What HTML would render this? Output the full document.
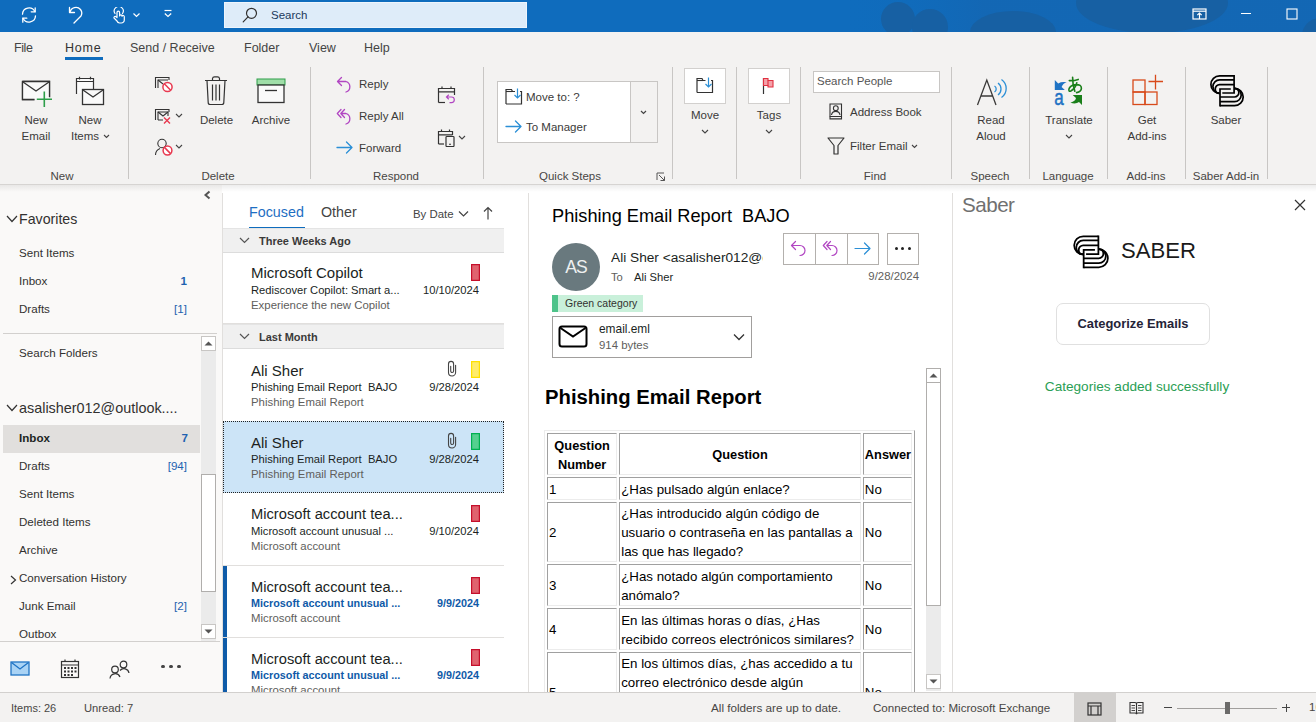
<!DOCTYPE html><html><head><meta charset="utf-8"><style>
*{margin:0;padding:0}
html,body{width:1316px;height:722px;overflow:hidden;background:#fff;font-family:"Liberation Sans", sans-serif;}
.a{position:absolute}
.t{position:absolute;white-space:nowrap;line-height:1}
table.em{border-collapse:separate;border-spacing:2px;border:1px solid;border-color:#ececec #a0a0a0 #a0a0a0 #ececec;font-size:13.3px;line-height:19px;color:#000;table-layout:fixed}
table.em th,table.em td{border:1px solid;border-color:#a0a0a0 #ececec #ececec #a0a0a0;padding:1px 1px 0 1px;vertical-align:middle;text-align:left;font-weight:400;box-sizing:border-box}
table.em th{font-weight:700;text-align:center;font-size:12.8px;line-height:19px}
</style></head><body>
<div class="a" style="left:0px;top:0px;width:1316px;height:32px;background:#0f6cbd;overflow:hidden"></div>
<svg class="a" style="left:640px;top:0px;" width="676" height="32" viewBox="0 0 676 32" fill="none">
<defs><linearGradient id="tg" x1="0" x2="1"><stop offset="0" stop-color="#0f6cbd" stop-opacity="0"/><stop offset="0.3" stop-color="#1466b2" stop-opacity="1"/></linearGradient></defs>
<rect x="200" y="0" width="476" height="32" fill="url(#tg)" opacity="0.8"/>
<g fill="#1760a3">
<circle cx="258" cy="19" r="17"/>
<circle cx="290" cy="27" r="18"/>
<ellipse cx="373" cy="32" rx="43" ry="21"/>
<ellipse cx="512" cy="3" rx="76" ry="30"/>
<circle cx="680" cy="36" r="18"/>
</g></svg>
<svg class="a" style="left:20px;top:6px;" width="18" height="18" viewBox="0 0 18 18" fill="none"><g stroke="#ffffff" stroke-width="1.3" stroke-linecap="round" fill="none">
<path d="M2.5 8.2 A6.5 6.5 0 0 1 14.8 5.5"/><path d="M15.5 9.8 A6.5 6.5 0 0 1 3.2 12.5"/>
<path d="M15.2 1.8 V5.8 H11.2"/><path d="M2.8 16.2 V12.2 H6.8"/></g></svg>
<svg class="a" style="left:68px;top:6px;" width="16" height="18" viewBox="0 0 16 18" fill="none"><g stroke="#ffffff" stroke-width="1.3" stroke-linecap="round" stroke-linejoin="round" fill="none">
<path d="M1.5 1.5 V6.5 H6.5"/><path d="M2 6.2 A6 6 0 0 1 12.5 3.5 A6 6 0 0 1 13 10 L6 17"/></g></svg>
<svg class="a" style="left:112px;top:7px;" width="14" height="17" viewBox="0 0 14 17" fill="none"><g stroke="#ffffff" stroke-width="1.2" stroke-linecap="round" stroke-linejoin="round" fill="none">
<path d="M3 6.5 A4.5 4.5 0 1 1 10.5 6.5"/>
<path d="M5 14 L2 11 A1.2 1.2 0 0 1 3.8 9.6 L5 10.6 V5.5 A1.3 1.3 0 0 1 7.6 5.5 V9 A1.2 1.2 0 0 1 10 9.2 A1.2 1.2 0 0 1 12.3 9.8 V13 A3 3 0 0 1 9.3 16 H7.5 A3 3 0 0 1 5 14 Z"/></g></svg>
<svg class="a" style="left:132px;top:12px;" width="9" height="6" viewBox="0 0 9 6" fill="none"><path d="M1.5 1.5 L4.5 4.5 L7.5 1.5" stroke="#ffffff" stroke-width="1.2" fill="none"/></svg>
<svg class="a" style="left:163px;top:9px;" width="10" height="9" viewBox="0 0 10 9" fill="none"><g stroke="#ffffff" stroke-width="1.2" fill="none"><path d="M1.5 1.5 H8.5"/><path d="M1.8 4.5 L5 7.5 L8.2 4.5"/></g></svg>
<div class="a" style="left:224px;top:2px;width:303px;height:26px;background:#deecf9;box-shadow:inset 0 0 0 1px #eef5fc"></div>
<svg class="a" style="left:242px;top:7px;" width="16" height="16" viewBox="0 0 16 16" fill="none"><g stroke="#323130" stroke-width="1.2" fill="none"><circle cx="9.5" cy="6.3" r="5"/><path d="M6 9.8 L1.2 14.8" stroke-linecap="round"/></g></svg>
<div class="t" style="left:271px;top:10.27px;font-size:11.5px;color:#1b3a5c;">Search</div>
<svg class="a" style="left:1192px;top:8px;" width="15" height="12" viewBox="0 0 15 12" fill="none"><g stroke="#ffffff" stroke-width="1.2" fill="none"><rect x="1" y="1" width="13" height="10"/><path d="M1 3.2 H14"/><path d="M7.5 11 V5.2 M5.3 7.2 L7.5 5 L9.7 7.2"/></g></svg>
<div class="a" style="left:1241px;top:13px;width:10px;height:1px;background:#fff"></div>
<svg class="a" style="left:1286px;top:8px;" width="12" height="12" viewBox="0 0 12 12" fill="none"><rect x="1" y="1" width="10" height="10" stroke="#ffffff" stroke-width="1.1" fill="none"/></svg>
<div class="a" style="left:0px;top:32px;width:1316px;height:153px;background:#f3f2f1"></div>
<div class="t" style="left:14px;top:42.42px;font-size:12.5px;color:#444;letter-spacing:-0.4px;">File</div>
<div class="t" style="left:65px;top:42.42px;font-size:12.5px;color:#333;letter-spacing:0.8px;">Home</div>
<div class="a" style="left:65px;top:57px;width:38px;height:3px;background:#0f6cbd"></div>
<div class="t" style="left:130px;top:42.42px;font-size:12.5px;color:#444;">Send / Receive</div>
<div class="t" style="left:244px;top:42.42px;font-size:12.5px;color:#444;">Folder</div>
<div class="t" style="left:309px;top:42.42px;font-size:12.5px;color:#444;">View</div>
<div class="t" style="left:364px;top:42.42px;font-size:12.5px;color:#444;">Help</div>
<div class="a" style="left:0px;top:184px;width:1316px;height:1px;background:#d6d4d2"></div>
<div class="a" style="left:128px;top:67px;width:1px;height:112px;background:#c8c6c4"></div>
<div class="a" style="left:310px;top:67px;width:1px;height:112px;background:#c8c6c4"></div>
<div class="a" style="left:483px;top:67px;width:1px;height:112px;background:#c8c6c4"></div>
<div class="a" style="left:672px;top:67px;width:1px;height:112px;background:#c8c6c4"></div>
<div class="a" style="left:736px;top:67px;width:1px;height:112px;background:#c8c6c4"></div>
<div class="a" style="left:800px;top:67px;width:1px;height:112px;background:#c8c6c4"></div>
<div class="a" style="left:951px;top:67px;width:1px;height:112px;background:#c8c6c4"></div>
<div class="a" style="left:1029px;top:67px;width:1px;height:112px;background:#c8c6c4"></div>
<div class="a" style="left:1107px;top:67px;width:1px;height:112px;background:#c8c6c4"></div>
<div class="a" style="left:1185px;top:67px;width:1px;height:112px;background:#c8c6c4"></div>
<div class="a" style="left:1267px;top:67px;width:1px;height:112px;background:#c8c6c4"></div>
<svg class="a" style="left:21px;top:80px;" width="32" height="28" viewBox="0 0 32 28" fill="none"><path d="M1.5 1.5 H28.5 V17.5 M13.5 19.5 H1.5 V1.5" stroke="#333" stroke-width="1.3" fill="#fafafa"/>
<rect x="1.5" y="1.5" width="27" height="18" fill="#fafafa"/>
<path d="M13.5 19.5 H1.5 V1.5 H28.5 V17" stroke="#333" stroke-width="1.3" fill="none"/>
<path d="M2 2 L15 11 L28 2" stroke="#333" stroke-width="1.3" fill="none"/>
<path d="M23.3 11.5 V27 M15.8 19.3 H31" stroke="#2e9e4a" stroke-width="1.6"/></svg>
<div class="t" style="left:-264px;width:600px;text-align:center;top:115.27px;font-size:11.5px;color:#3b3a39;">New</div>
<div class="t" style="left:-264px;width:600px;text-align:center;top:131.27px;font-size:11.5px;color:#3b3a39;">Email</div>
<svg class="a" style="left:75px;top:76px;" width="30" height="30" viewBox="0 0 30 30" fill="none"><path d="M1.5 18 V2.5 H18.5 V13" stroke="#333" stroke-width="1.2" fill="#fafafa"/>
<path d="M1.5 5.5 H18.5 M4.5 0.8 V3.5 M15.5 0.8 V3.5" stroke="#333" stroke-width="1.2"/>
<rect x="7.5" y="13.5" width="21" height="15" stroke="#333" stroke-width="1.3" fill="#fafafa"/>
<path d="M8 14 L18 21 L28 14" stroke="#333" stroke-width="1.3" fill="none"/></svg>
<div class="t" style="left:-210px;width:600px;text-align:center;top:115.27px;font-size:11.5px;color:#3b3a39;">New</div>
<div class="t" style="left:-215px;width:600px;text-align:center;top:131.27px;font-size:11.5px;color:#3b3a39;">Items</div>
<svg class="a" style="left:103px;top:134px;" width="7" height="5" viewBox="0 0 7 5" fill="none"><path d="M1 1 L3.5 3.5 L6 1" stroke="#444" stroke-width="1.1" fill="none"/></svg>
<div class="t" style="left:-238px;width:600px;text-align:center;top:171.27px;font-size:11.5px;color:#484644;">New</div>
<svg class="a" style="left:154px;top:76px;" width="20" height="17" viewBox="0 0 20 17" fill="none"><path d="M1.5 12 V1.5 H15 V4" stroke="#333" stroke-width="1.1" fill="none"/><path d="M4 12 V4 H14" stroke="#333" stroke-width="1.1" fill="none"/>
<path d="M4 4 L9 8" stroke="#333" stroke-width="1.1"/>
<circle cx="13.5" cy="11" r="4.6" stroke="#e8384f" stroke-width="1.5" fill="#fff"/><path d="M10.3 7.8 L16.7 14.2" stroke="#e8384f" stroke-width="1.5"/></svg>
<svg class="a" style="left:154px;top:108px;" width="20" height="17" viewBox="0 0 20 17" fill="none"><path d="M1.5 12 V1.5 H15 V4" stroke="#333" stroke-width="1.1" fill="none"/><path d="M4 12 H9 M4 12 V4 H14 V8" stroke="#333" stroke-width="1.1" fill="none"/>
<path d="M4 4 L9 8 L14 4" stroke="#333" stroke-width="1.1"/>
<path d="M10 9.5 L16 15.5 M16 9.5 L10 15.5" stroke="#e8384f" stroke-width="1.4"/></svg>
<svg class="a" style="left:175px;top:113px;" width="8" height="5" viewBox="0 0 8 5" fill="none"><path d="M1 1 L4 4 L7 1" stroke="#444" stroke-width="1.1" fill="none"/></svg>
<svg class="a" style="left:154px;top:138px;" width="20" height="18" viewBox="0 0 20 18" fill="none"><circle cx="8" cy="5.5" r="4.2" stroke="#333" stroke-width="1.1" fill="none"/><path d="M1.5 17 A7 7 0 0 1 6 10.5" stroke="#333" stroke-width="1.1" fill="none"/>
<circle cx="13.5" cy="12.5" r="4.4" stroke="#e8384f" stroke-width="1.5" fill="#fff"/><path d="M10.4 9.4 L16.6 15.6" stroke="#e8384f" stroke-width="1.5"/></svg>
<svg class="a" style="left:175px;top:144px;" width="8" height="5" viewBox="0 0 8 5" fill="none"><path d="M1 1 L4 4 L7 1" stroke="#444" stroke-width="1.1" fill="none"/></svg>
<svg class="a" style="left:204px;top:76px;" width="24" height="30" viewBox="0 0 24 30" fill="none"><path d="M1 4.5 H23 M8.5 4.5 V2.5 A2 2 0 0 1 10.5 0.8 H13.5 A2 2 0 0 1 15.5 2.5 V4.5" stroke="#333" stroke-width="1.2" fill="none"/>
<path d="M3 4.5 L4.2 26.5 A2 2 0 0 0 6.2 28.5 H17.8 A2 2 0 0 0 19.8 26.5 L21 4.5" stroke="#333" stroke-width="1.2" fill="none"/>
<path d="M8.5 8.5 V24.5 M12 8.5 V24.5 M15.5 8.5 V24.5" stroke="#333" stroke-width="1.2"/></svg>
<div class="t" style="left:-83.5px;width:600px;text-align:center;top:115.27px;font-size:11.5px;color:#3b3a39;">Delete</div>
<svg class="a" style="left:256px;top:78px;" width="30" height="26" viewBox="0 0 30 26" fill="none"><rect x="1" y="1" width="28" height="6" fill="#9fdea8" stroke="#2e9e4a" stroke-width="1"/>
<rect x="2" y="7" width="26" height="17.5" stroke="#333" stroke-width="1.3" fill="#fafafa"/>
<path d="M9 12.5 H21" stroke="#333" stroke-width="1.3"/></svg>
<div class="t" style="left:-29px;width:600px;text-align:center;top:115.27px;font-size:11.5px;color:#3b3a39;">Archive</div>
<div class="t" style="left:-82px;width:600px;text-align:center;top:171.27px;font-size:11.5px;color:#484644;">Delete</div>
<svg class="a" style="left:336px;top:76px;" width="18" height="17" viewBox="0 0 18 17" fill="none"><path d="M5.5 1.5 L1.5 5.5 L5.5 9.5 M1.8 5.5 H10 A5.5 5.5 0 0 1 10 16" stroke="#b146c2" stroke-width="1.3" fill="none" stroke-linecap="round" stroke-linejoin="round"/></svg>
<div class="t" style="left:359px;top:79.27px;font-size:11.5px;color:#3b3a39;">Reply</div>
<svg class="a" style="left:336px;top:108px;" width="18" height="17" viewBox="0 0 18 17" fill="none"><path d="M5 1.5 L1.3 5.5 L5 9.5 M8.5 1.5 L4.8 5.5 L8.5 9.5 M5 5.5 H10 A5.5 5.5 0 0 1 10 16" stroke="#b146c2" stroke-width="1.3" fill="none" stroke-linecap="round" stroke-linejoin="round"/></svg>
<div class="t" style="left:359px;top:111.27px;font-size:11.5px;color:#3b3a39;">Reply All</div>
<svg class="a" style="left:336px;top:141px;" width="18" height="13" viewBox="0 0 18 13" fill="none"><path d="M1 6.5 H16 M10.5 1 L16 6.5 L10.5 12" stroke="#2b8fd6" stroke-width="1.3" fill="none" stroke-linecap="round" stroke-linejoin="round"/></svg>
<div class="t" style="left:359px;top:143.27px;font-size:11.5px;color:#3b3a39;">Forward</div>
<svg class="a" style="left:437px;top:86px;" width="20" height="18" viewBox="0 0 20 18" fill="none"><path d="M1.5 16.5 V2.5 H17.5 V9" stroke="#333" stroke-width="1.2" fill="none"/><path d="M1.5 16.5 H8" stroke="#333" stroke-width="1.2"/>
<path d="M1.5 5.8 H17.5 M5 0.5 V3 M14 0.5 V3" stroke="#333" stroke-width="1.2"/>
<path d="M11.8 8.8 L9.5 11 L11.8 13.2 M9.8 11 H14.5 A2.8 2.8 0 0 1 14.5 16.6 H12.5" stroke="#b146c2" stroke-width="1.2" fill="none"/></svg>
<svg class="a" style="left:437px;top:129px;" width="19" height="18" viewBox="0 0 19 18" fill="none"><path d="M1.5 15 V2.5 H15.5 V6" stroke="#333" stroke-width="1.2" fill="none"/><path d="M1.5 15 H7" stroke="#333" stroke-width="1.2"/>
<path d="M1.5 5.8 H15.5 M4.5 0.5 V3 M12.5 0.5 V3" stroke="#333" stroke-width="1.2"/>
<rect x="9" y="7.5" width="8" height="10" rx="0.8" stroke="#333" stroke-width="1.2" fill="#f3f2f1"/><path d="M12 15.2 H14" stroke="#333" stroke-width="1.1"/></svg>
<svg class="a" style="left:458px;top:135px;" width="8" height="5" viewBox="0 0 8 5" fill="none"><path d="M1 1 L4 4 L7 1" stroke="#444" stroke-width="1.1" fill="none"/></svg>
<div class="t" style="left:96px;width:600px;text-align:center;top:171.27px;font-size:11.5px;color:#484644;">Respond</div>
<div class="a" style="left:497px;top:81px;width:161px;height:62px;background:#fff;box-shadow:inset 0 0 0 1px #c8c6c4"></div>
<div class="a" style="left:630px;top:82px;width:27px;height:60px;background:#f3f2f1;border-left:1px solid #c8c6c4;box-sizing:border-box"></div>
<svg class="a" style="left:505px;top:88px;" width="18" height="17" viewBox="0 0 18 17" fill="none"><path d="M1 16 V1.5 H6.5 L7.5 3.5 H10" stroke="#333" stroke-width="1.2" fill="none"/><path d="M1 16 H16.5 V3.5 H15" stroke="#333" stroke-width="1.2" fill="none"/>
<path d="M1 3.5 H7" stroke="#333" stroke-width="1.1"/>
<path d="M12.5 0.5 V10 M9.5 7 L12.5 10 L15.5 7" stroke="#2b8fd6" stroke-width="1.2" fill="none"/></svg>
<div class="t" style="left:526px;top:92.27px;font-size:11.5px;color:#3b3a39;">Move to: ?</div>
<svg class="a" style="left:505px;top:120px;" width="18" height="13" viewBox="0 0 18 13" fill="none"><path d="M1 6.5 H16 M10.5 1 L16 6.5 L10.5 12" stroke="#2b8fd6" stroke-width="1.3" fill="none" stroke-linecap="round" stroke-linejoin="round"/></svg>
<div class="t" style="left:526px;top:122.27px;font-size:11.5px;color:#3b3a39;">To Manager</div>
<svg class="a" style="left:640px;top:110px;" width="7" height="5" viewBox="0 0 7 5" fill="none"><path d="M1 1 L3.5 3.5 L6 1" stroke="#444" stroke-width="1.2" fill="none"/></svg>
<div class="t" style="left:270px;width:600px;text-align:center;top:171.27px;font-size:11.5px;color:#484644;">Quick Steps</div>
<svg class="a" style="left:656px;top:172px;" width="10" height="9" viewBox="0 0 10 9" fill="none"><path d="M1 8 V1 H8 M3 3 L8.5 8.5 M4.5 8.5 H8.5 V4.5" stroke="#555" stroke-width="1" fill="none"/></svg>
<div class="a" style="left:684px;top:68px;width:42px;height:36px;background:#fff;box-shadow:inset 0 0 0 1px #d2d0ce"></div>
<svg class="a" style="left:696px;top:77px;" width="18" height="17" viewBox="0 0 18 17" fill="none"><path d="M1 15.5 V1.5 H6 L7 3.5 H9.5" stroke="#333" stroke-width="1.2" fill="none"/><path d="M1 15.5 H16.5 V3.5 H15" stroke="#333" stroke-width="1.2" fill="none"/>
<path d="M1 3.5 H7" stroke="#333" stroke-width="1.1"/>
<path d="M12.5 0.5 V10 M9.5 7 L12.5 10 L15.5 7" stroke="#2b8fd6" stroke-width="1.2" fill="none"/></svg>
<div class="t" style="left:405px;width:600px;text-align:center;top:110.27px;font-size:11.5px;color:#3b3a39;">Move</div>
<svg class="a" style="left:701px;top:129px;" width="8" height="5" viewBox="0 0 8 5" fill="none"><path d="M1 1 L4 4 L7 1" stroke="#444" stroke-width="1.1" fill="none"/></svg>
<div class="a" style="left:748px;top:68px;width:42px;height:36px;background:#fff;box-shadow:inset 0 0 0 1px #d2d0ce"></div>
<svg class="a" style="left:762px;top:77px;" width="13" height="18" viewBox="0 0 13 18" fill="none"><path d="M1.5 1 V17" stroke="#333" stroke-width="1.2"/>
<path d="M1.5 1.5 H6 V3.5 H11 V10 H6 V8.5 H1.5 Z" fill="#f4a1a9" stroke="#e03040" stroke-width="1.1"/>
<path d="M6 3.5 V8.5" stroke="#e03040" stroke-width="1.1"/></svg>
<div class="t" style="left:469px;width:600px;text-align:center;top:110.27px;font-size:11.5px;color:#3b3a39;">Tags</div>
<svg class="a" style="left:765px;top:129px;" width="8" height="5" viewBox="0 0 8 5" fill="none"><path d="M1 1 L4 4 L7 1" stroke="#444" stroke-width="1.1" fill="none"/></svg>
<div class="a" style="left:813px;top:71px;width:127px;height:22px;background:#fff;box-shadow:inset 0 0 0 1px #c8c6c4"></div>
<div class="t" style="left:817px;top:76.27px;font-size:11.5px;color:#555;">Search People</div>
<svg class="a" style="left:829px;top:103px;" width="14" height="17" viewBox="0 0 14 17" fill="none"><path d="M1 1 H12.5 V13.5 H1 Z" stroke="#333" stroke-width="1.1" fill="none"/><path d="M1 13.5 V16 H12.5 V13.5 M1 15.8 H12.5" stroke="#333" stroke-width="1.1" fill="none"/>
<circle cx="6.8" cy="5.2" r="2.4" stroke="#333" stroke-width="1.1" fill="none"/><path d="M2.5 12 A4.3 4.3 0 0 1 11 12" stroke="#333" stroke-width="1.1" fill="none"/></svg>
<div class="t" style="left:850px;top:107.27px;font-size:11.5px;color:#3b3a39;">Address Book</div>
<svg class="a" style="left:827px;top:137px;" width="18" height="18" viewBox="0 0 18 18" fill="none"><path d="M1 1 H17 L11 8.5 V17 H7 V8.5 Z" stroke="#333" stroke-width="1.2" fill="none" stroke-linejoin="round"/></svg>
<div class="t" style="left:850px;top:141.27px;font-size:11.5px;color:#3b3a39;">Filter Email</div>
<svg class="a" style="left:911px;top:144px;" width="7" height="5" viewBox="0 0 7 5" fill="none"><path d="M1 1 L3.5 3.5 L6 1" stroke="#444" stroke-width="1.1" fill="none"/></svg>
<div class="t" style="left:575px;width:600px;text-align:center;top:171.27px;font-size:11.5px;color:#484644;">Find</div>
<svg class="a" style="left:975px;top:76px;" width="32" height="31" viewBox="0 0 32 31" fill="none"><path d="M2.5 29 L11.8 4 L21 29 M6 20 H17.5" stroke="#3b3a39" stroke-width="1.3" fill="none"/>
<path d="M19.5 10 A3.5 3.5 0 0 1 19.5 16 M23 7 A7.5 7.5 0 0 1 23 19 M26.5 3.5 A11 11 0 0 1 26.5 21.5" stroke="#2b8fd6" stroke-width="1.3" fill="none"/></svg>
<div class="t" style="left:691px;width:600px;text-align:center;top:115.27px;font-size:11.5px;color:#3b3a39;">Read</div>
<div class="t" style="left:691px;width:600px;text-align:center;top:131.27px;font-size:11.5px;color:#3b3a39;">Aloud</div>
<div class="t" style="left:690px;width:600px;text-align:center;top:171.27px;font-size:11.5px;color:#484644;">Speech</div>
<svg class="a" style="left:1048px;top:72px;" width="42" height="38" viewBox="0 0 42 38" fill="none"><path d="M6.8 7.9 V17.9 H16.8 L13.6 15 Q14.8 11.6 18.7 10.3 Q13.5 9.6 10.2 11.4 Z" fill="#1f73c4"/>
<text transform="translate(6.3 32.9) scale(1 1.3)" font-family="Liberation Sans, sans-serif" font-size="17" fill="#1f73c4" stroke="#1f73c4" stroke-width="0.4">a</text>
<g stroke="#1a7f1a" stroke-width="1.6" fill="none" stroke-linecap="round">
<path d="M21.3 8.6 Q26 8.9 30.2 7.4"/>
<path d="M24.6 5.3 Q24.6 13 26.8 19.2"/>
<path d="M28.8 10.8 Q27.4 16.5 22.8 19 Q20.6 20 20.9 17.2 Q21.8 13.2 28 12.6 Q33.4 12.4 33.4 16.2 Q33.4 19.6 28.6 20.6"/>
</g>
<path d="M34 22.9 V32.9 L31 30 Q28 32.5 22.4 30.8 Q27.6 28.8 28 25.9 L24.7 22.9 Z" fill="#1a7f1a"/></svg>
<div class="t" style="left:769px;width:600px;text-align:center;top:115.27px;font-size:11.5px;color:#3b3a39;">Translate</div>
<svg class="a" style="left:1065px;top:134px;" width="8" height="5" viewBox="0 0 8 5" fill="none"><path d="M1 1 L4 4 L7 1" stroke="#444" stroke-width="1.1" fill="none"/></svg>
<div class="t" style="left:768px;width:600px;text-align:center;top:171.27px;font-size:11.5px;color:#484644;">Language</div>
<svg class="a" style="left:1131px;top:74px;" width="34" height="33" viewBox="0 0 34 33" fill="none"><g stroke="#d84a1b" stroke-width="1.3" fill="none">
<rect x="2" y="6" width="12" height="12"/><rect x="2" y="18" width="12" height="12.5"/><rect x="14" y="18" width="12" height="12.5"/>
<path d="M24.5 0.8 V15.5 M17.5 7.5 H32"/></g></svg>
<div class="t" style="left:847px;width:600px;text-align:center;top:115.27px;font-size:11.5px;color:#3b3a39;">Get</div>
<div class="t" style="left:847px;width:600px;text-align:center;top:131.27px;font-size:11.5px;color:#3b3a39;">Add-ins</div>
<div class="t" style="left:846px;width:600px;text-align:center;top:171.27px;font-size:11.5px;color:#484644;">Add-ins</div>
<svg class="a" style="left:1205px;top:70px;" width="45" height="40" viewBox="0 0 45 40" fill="none"><g stroke="#000" stroke-width="1.7" fill="none">
<path d="M29.1 5.9 H14.6 A8.7 8.7 0 0 0 14.6 23.3"/>
<path d="M29.1 9.9 H14.6 A6.7 6.7 0 0 0 14.6 23.3"/>
<path d="M29.1 14.6 H14.6 A4.35 4.35 0 0 0 14.6 23.3"/>
<path d="M29.1 5.05 V23 H17.3"/>
<path d="M15 35.7 H29.5 A8.7 8.7 0 0 0 29.5 18.3"/>
<path d="M15 31.7 H29.5 A6.7 6.7 0 0 0 29.5 18.3"/>
<path d="M15 27 H29.5 A4.35 4.35 0 0 0 29.5 18.3"/>
<path d="M15 36.55 V19 H25.8"/>
</g></svg>
<div class="t" style="left:926px;width:600px;text-align:center;top:115.27px;font-size:11.5px;color:#3b3a39;">Saber</div>
<div class="t" style="left:926px;width:600px;text-align:center;top:171.27px;font-size:11.5px;color:#484644;">Saber Add-in</div>
<div class="a" style="left:0px;top:185px;width:222px;height:507px;background:#faf9f8"></div>
<div class="a" style="left:222px;top:193px;width:1px;height:499px;background:#e1dfdd"></div>
<svg class="a" style="left:203px;top:190px;" width="9" height="10" viewBox="0 0 9 10" fill="none"><path d="M6.5 1.5 L2.5 5 L6.5 8.5" stroke="#555" stroke-width="2" fill="none"/></svg>
<svg class="a" style="left:6px;top:214px;" width="12" height="10" viewBox="0 0 12 10" fill="none"><path d="M1 2 L6 7.5 L11 2" stroke="#333" stroke-width="1.2" fill="none"/></svg>
<div class="t" style="left:19px;top:211.98px;font-size:14.2px;color:#323130;">Favorites</div>
<div class="t" style="left:19px;top:247.18px;font-size:11.6px;color:#323130;">Sent Items</div>
<div class="t" style="left:19px;top:275.18px;font-size:11.6px;color:#323130;">Inbox</div>
<div class="t" style="right:1129px;text-align:right;top:275.18px;font-size:11.6px;color:#1e62b0;font-weight:700;">1</div>
<div class="t" style="left:19px;top:303.18px;font-size:11.6px;color:#323130;">Drafts</div>
<div class="t" style="right:1129px;text-align:right;top:303.18px;font-size:11.6px;color:#1e62b0;">[1]</div>
<div class="a" style="left:3px;top:333px;width:214px;height:1px;background:#d2d0ce"></div>
<div class="t" style="left:19px;top:347.18px;font-size:11.6px;color:#323130;">Search Folders</div>
<svg class="a" style="left:6px;top:403px;" width="12" height="10" viewBox="0 0 12 10" fill="none"><path d="M1 2 L6 7.5 L11 2" stroke="#333" stroke-width="1.2" fill="none"/></svg>
<div class="t" style="left:19px;top:400.81px;font-size:14.4px;color:#323130;">asalisher012@outlook....</div>
<div class="a" style="left:201px;top:351px;width:15px;height:290px;background:#ebebeb"></div>
<div class="a" style="left:201px;top:336px;width:15px;height:15px;background:#fff;box-shadow:inset 0 0 0 1px #c8c6c4"></div>
<svg class="a" style="left:203px;top:340px;" width="11" height="7" viewBox="0 0 11 7" fill="none"><path d="M1.5 5.5 L5.5 1.5 L9.5 5.5 Z" fill="#555"/></svg>
<div class="a" style="left:201px;top:474px;width:15px;height:118px;background:#fff;box-shadow:inset 0 0 0 1px #b0aeac"></div>
<div class="a" style="left:201px;top:624px;width:15px;height:15px;background:#fff;box-shadow:inset 0 0 0 1px #c8c6c4"></div>
<svg class="a" style="left:203px;top:628px;" width="11" height="7" viewBox="0 0 11 7" fill="none"><path d="M1.5 1.5 L5.5 5.5 L9.5 1.5 Z" fill="#555"/></svg>
<div class="a" style="left:3px;top:425px;width:197px;height:28px;background:#e1dfdd"></div>
<div class="t" style="left:19px;top:432.18px;font-size:11.6px;color:#201f1e;font-weight:700;">Inbox</div>
<div class="t" style="right:1128px;text-align:right;top:432.18px;font-size:11.6px;color:#1e62b0;font-weight:700;">7</div>
<div class="t" style="left:19px;top:460.18px;font-size:11.6px;color:#323130;">Drafts</div>
<div class="t" style="right:1129px;text-align:right;top:460.18px;font-size:11.6px;color:#1e62b0;">[94]</div>
<div class="t" style="left:19px;top:488.18px;font-size:11.6px;color:#323130;">Sent Items</div>
<div class="t" style="left:19px;top:516.18px;font-size:11.6px;color:#323130;">Deleted Items</div>
<div class="t" style="left:19px;top:544.18px;font-size:11.6px;color:#323130;">Archive</div>
<svg class="a" style="left:9px;top:575px;" width="8" height="10" viewBox="0 0 8 10" fill="none"><path d="M2 1 L6.5 5 L2 9" stroke="#333" stroke-width="1.2" fill="none"/></svg>
<div class="t" style="left:19px;top:572.18px;font-size:11.6px;color:#323130;">Conversation History</div>
<div class="t" style="left:19px;top:600.18px;font-size:11.6px;color:#323130;">Junk Email</div>
<div class="t" style="right:1129px;text-align:right;top:600.18px;font-size:11.6px;color:#1e62b0;">[2]</div>
<div class="a" style="left:0;top:620px;width:200px;height:21px;overflow:hidden">
<div class="t" style="left:19px;top:8.18px;font-size:11.6px;color:#323130;">Outbox</div>
</div>
<div class="a" style="left:0px;top:641px;width:220px;height:1px;background:#d2d0ce"></div>
<svg class="a" style="left:10px;top:661px;" width="20" height="15" viewBox="0 0 20 15" fill="none"><rect x="1" y="1" width="18" height="13" fill="#a9d3f5" stroke="#1f73c4" stroke-width="1.3"/><path d="M1.5 1.5 L10 8 L18.5 1.5" stroke="#1f73c4" stroke-width="1.3" fill="none"/></svg>
<svg class="a" style="left:60px;top:659px;" width="20" height="20" viewBox="0 0 20 20" fill="none"><rect x="1.5" y="2.5" width="17" height="16" stroke="#333" stroke-width="1.2" fill="none"/><path d="M1.5 6 H18.5 M5 0.5 V3 M15 0.5 V3" stroke="#333" stroke-width="1.2"/>
<g fill="#333"><rect x="4" y="8" width="2" height="2"/><rect x="7.5" y="8" width="2" height="2"/><rect x="11" y="8" width="2" height="2"/><rect x="14.5" y="8" width="2" height="2"/>
<rect x="4" y="11.5" width="2" height="2"/><rect x="7.5" y="11.5" width="2" height="2"/><rect x="11" y="11.5" width="2" height="2"/><rect x="14.5" y="11.5" width="2" height="2"/>
<rect x="4" y="15" width="2" height="2"/><rect x="7.5" y="15" width="2" height="2"/><rect x="11" y="15" width="2" height="2"/></g></svg>
<svg class="a" style="left:109px;top:660px;" width="21" height="19" viewBox="0 0 21 19" fill="none"><g stroke="#333" stroke-width="1.2" fill="none"><circle cx="6" cy="9.5" r="3.3"/><path d="M1 18.5 A5.2 5.2 0 0 1 11 17"/>
<circle cx="14.5" cy="4.5" r="3.3"/><path d="M11 10.5 A5.2 5.2 0 0 1 20 13"/></g></svg>
<div class="a" style="left:161.4px;top:665.2px;width:3.2px;height:3.2px;border-radius:50%;background:#444"></div>
<div class="a" style="left:169.4px;top:665.2px;width:3.2px;height:3.2px;border-radius:50%;background:#444"></div>
<div class="a" style="left:177.4px;top:665.2px;width:3.2px;height:3.2px;border-radius:50%;background:#444"></div>
<div class="a" style="left:223px;top:185px;width:305px;height:507px;background:#fff"></div>
<div class="a" style="left:528px;top:193px;width:1px;height:499px;background:#e1dfdd"></div>
<div class="t" style="left:249px;top:204.9px;font-size:14.3px;color:#1e6ec2;">Focused</div>
<div class="a" style="left:249px;top:227px;width:56px;height:2px;background:#0f6cbd"></div>
<div class="t" style="left:321px;top:204.9px;font-size:14.3px;color:#444;">Other</div>
<div class="t" style="left:413px;top:209.35px;font-size:11.4px;color:#444;">By Date</div>
<svg class="a" style="left:458px;top:210px;" width="11" height="8" viewBox="0 0 11 8" fill="none"><path d="M1 1.5 L5.5 6 L10 1.5" stroke="#444" stroke-width="1.2" fill="none"/></svg>
<svg class="a" style="left:483px;top:206px;" width="10" height="14" viewBox="0 0 10 14" fill="none"><path d="M5 13.5 V1.5 M1 5.5 L5 1.5 L9 5.5" stroke="#444" stroke-width="1.2" fill="none"/></svg>
<div class="a" style="left:223px;top:228px;width:281px;height:25px;background:#f0f0f0;border-bottom:1px solid #dcdcdc;border-top:1px solid #e4e4e4;box-sizing:border-box"></div>
<svg class="a" style="left:239px;top:237px;" width="11" height="7" viewBox="0 0 11 7" fill="none"><path d="M1 1 L5.5 5.5 L10 1" stroke="#555" stroke-width="1.2" fill="none"/></svg>
<div class="t" style="left:259px;top:235.69px;font-size:11px;color:#3b3a39;font-weight:700;">Three Weeks Ago</div>
<div class="t" style="left:251px;top:265.3px;font-size:15px;color:#201f1e;">Microsoft Copilot</div>
<div class="t" style="left:251px;top:284.52px;font-size:11.2px;color:#201f1e;">Rediscover Copilot: Smart a...</div>
<div class="t" style="right:837px;text-align:right;top:284.52px;font-size:11.2px;color:#201f1e;">10/10/2024</div>
<div class="t" style="left:251px;top:300.35px;font-size:11.4px;color:#605e5c;">Experience the new Copilot</div>
<div class="a" style="left:471px;top:264px;width:9px;height:17px;background:#e0636f;box-shadow:inset 0 0 0 1.2px #c50f2b"></div>
<div class="a" style="left:223px;top:323px;width:281px;height:1px;background:#e1dfdd"></div>
<div class="a" style="left:223px;top:324px;width:281px;height:25px;background:#f0f0f0;border-bottom:1px solid #dcdcdc;border-top:1px solid #e4e4e4;box-sizing:border-box"></div>
<svg class="a" style="left:239px;top:333px;" width="11" height="7" viewBox="0 0 11 7" fill="none"><path d="M1 1 L5.5 5.5 L10 1" stroke="#555" stroke-width="1.2" fill="none"/></svg>
<div class="t" style="left:259px;top:331.69px;font-size:11px;color:#3b3a39;font-weight:700;">Last Month</div>
<div class="t" style="left:251px;top:363.3px;font-size:15px;color:#201f1e;">Ali Sher</div>
<div class="t" style="left:251px;top:381.52px;font-size:11.2px;color:#201f1e;">Phishing Email Report&nbsp; BAJO</div>
<div class="t" style="right:837px;text-align:right;top:381.52px;font-size:11.2px;color:#201f1e;">9/28/2024</div>
<div class="t" style="left:251px;top:397.35px;font-size:11.4px;color:#605e5c;">Phishing Email Report</div>
<svg class="a" style="left:447px;top:360px;" width="11" height="18" viewBox="0 0 11 18" fill="none"><path d="M3.7 6.2 V11 A1.45 1.45 0 0 0 6.6 11 V3.9 A2.55 2.55 0 0 0 1.5 3.9 V12.4 A3.55 3.55 0 0 0 8.6 12.4 V5.2" stroke="#444" stroke-width="1.1" fill="none" stroke-linecap="round"/></svg>
<div class="a" style="left:471px;top:361px;width:9px;height:17px;background:#ffec6b;box-shadow:inset 0 0 0 1.2px #ffe000"></div>
<div class="a" style="left:223px;top:421px;width:281px;height:72px;background:#cce4f7;border:1px dotted #222;box-sizing:border-box"></div>
<div class="t" style="left:251px;top:435.3px;font-size:15px;color:#201f1e;">Ali Sher</div>
<div class="t" style="left:251px;top:453.52px;font-size:11.2px;color:#201f1e;">Phishing Email Report&nbsp; BAJO</div>
<div class="t" style="right:837px;text-align:right;top:453.52px;font-size:11.2px;color:#201f1e;">9/28/2024</div>
<div class="t" style="left:251px;top:469.35px;font-size:11.4px;color:#605e5c;">Phishing Email Report</div>
<svg class="a" style="left:447px;top:432px;" width="11" height="18" viewBox="0 0 11 18" fill="none"><path d="M3.7 6.2 V11 A1.45 1.45 0 0 0 6.6 11 V3.9 A2.55 2.55 0 0 0 1.5 3.9 V12.4 A3.55 3.55 0 0 0 8.6 12.4 V5.2" stroke="#444" stroke-width="1.1" fill="none" stroke-linecap="round"/></svg>
<div class="a" style="left:471px;top:433px;width:9px;height:17px;background:#56d08f;box-shadow:inset 0 0 0 1.2px #00b050"></div>
<div class="t" style="left:251px;top:506.56px;font-size:14.7px;color:#201f1e;">Microsoft account tea...</div>
<div class="t" style="left:251px;top:525.52px;font-size:11.2px;color:#201f1e;">Microsoft account unusual ...</div>
<div class="t" style="right:837px;text-align:right;top:525.52px;font-size:11.2px;color:#201f1e;">9/10/2024</div>
<div class="t" style="left:251px;top:541.35px;font-size:11.4px;color:#605e5c;">Microsoft account</div>
<div class="a" style="left:471px;top:505px;width:9px;height:17px;background:#e0636f;box-shadow:inset 0 0 0 1.2px #c50f2b"></div>
<div class="a" style="left:223px;top:565px;width:281px;height:1px;background:#e1dfdd"></div>
<div class="a" style="left:223px;top:566px;width:4px;height:71px;background:#0f5ba8"></div>
<div class="t" style="left:251px;top:579.56px;font-size:14.7px;color:#201f1e;">Microsoft account tea...</div>
<div class="t" style="left:251px;top:597.86px;font-size:10.8px;color:#0f5aa8;font-weight:700;">Microsoft account unusual ...</div>
<div class="t" style="right:837px;text-align:right;top:597.86px;font-size:10.8px;color:#0f5aa8;font-weight:700;">9/9/2024</div>
<div class="t" style="left:251px;top:613.35px;font-size:11.4px;color:#605e5c;">Microsoft account</div>
<div class="a" style="left:471px;top:577px;width:9px;height:17px;background:#e0636f;box-shadow:inset 0 0 0 1.2px #c50f2b"></div>
<div class="a" style="left:223px;top:637px;width:281px;height:1px;background:#e1dfdd"></div>
<div class="a" style="left:223px;top:638px;width:281px;height:54px;overflow:hidden">
<div class="a" style="left:0px;top:0px;width:4px;height:54px;background:#0f5ba8"></div>
<div class="t" style="left:28px;top:13.56px;font-size:14.7px;color:#201f1e;">Microsoft account tea...</div>
<div class="t" style="left:28px;top:31.86px;font-size:10.8px;color:#0f5aa8;font-weight:700;">Microsoft account unusual ...</div>
<div class="t" style="right:25px;top:31.86px;font-size:10.8px;color:#0f5aa8;font-weight:700">9/9/2024</div>
<div class="t" style="left:28px;top:47.35px;font-size:11.4px;color:#605e5c;">Microsoft account</div>
<div class="a" style="left:248px;top:11px;width:9px;height:17px;background:#e0636f;box-shadow:inset 0 0 0 1.2px #c50f2b"></div>
</div>
<div class="a" style="left:529px;top:185px;width:423px;height:507px;background:#fff"></div>
<div class="a" style="left:952px;top:193px;width:1px;height:499px;background:#e1dfdd"></div>
<div class="t" style="left:552px;top:206.59px;font-size:18.2px;color:#000;">Phishing Email Report&nbsp; BAJO</div>
<div class="a" style="left:552px;top:243px;width:48px;height:48px;border-radius:50%;background:#69797e"></div>
<div class="t" style="left:276.5px;width:600px;text-align:center;top:259.1px;font-size:17.6px;color:#eef0f0;letter-spacing:-1.2px;text-indent:-1.2px;">AS</div>
<div class="a" style="left:611px;top:240px;width:152px;height:30px;overflow:hidden">
<div class="t" style="left:0px;top:11.4px;font-size:13.7px;color:#201f1e;white-space:nowrap;">Ali Sher &lt;asalisher012@outlook.com&gt;</div>
</div>
<div class="t" style="left:611px;top:271.52px;font-size:11.2px;color:#605e5c;">To</div>
<div class="t" style="left:634px;top:271.52px;font-size:11.2px;color:#201f1e;">Ali Sher</div>
<div class="a" style="left:783px;top:233px;width:96px;height:32px;border:1px solid #b3b0ad;box-sizing:border-box"></div>
<div class="a" style="left:815px;top:233px;width:1px;height:32px;background:#b3b0ad"></div>
<div class="a" style="left:847px;top:233px;width:1px;height:32px;background:#b3b0ad"></div>
<svg class="a" style="left:790px;top:240px;" width="18" height="17" viewBox="0 0 18 17" fill="none"><path d="M5.5 1.5 L1.5 5.5 L5.5 9.5 M1.8 5.5 H10 A5 5 0 0 1 10 15.5" stroke="#b146c2" stroke-width="1.2" fill="none" stroke-linecap="round" stroke-linejoin="round"/></svg>
<svg class="a" style="left:822px;top:240px;" width="18" height="17" viewBox="0 0 18 17" fill="none"><path d="M5 1.5 L1.3 5.5 L5 9.5 M8.5 1.5 L4.8 5.5 L8.5 9.5 M5 5.5 H10 A5 5 0 0 1 10 15.5" stroke="#b146c2" stroke-width="1.2" fill="none" stroke-linecap="round" stroke-linejoin="round"/></svg>
<svg class="a" style="left:854px;top:242px;" width="18" height="13" viewBox="0 0 18 13" fill="none"><path d="M1 6.5 H16 M10.5 1 L16 6.5 L10.5 12" stroke="#2b8fd6" stroke-width="1.2" fill="none" stroke-linecap="round" stroke-linejoin="round"/></svg>
<div class="a" style="left:887px;top:233px;width:32px;height:32px;border:1px solid #b3b0ad;box-sizing:border-box"></div>
<div class="a" style="left:894.5px;top:246.5px;width:3px;height:3px;border-radius:50%;background:#222"></div>
<div class="a" style="left:901.0px;top:246.5px;width:3px;height:3px;border-radius:50%;background:#222"></div>
<div class="a" style="left:907.5px;top:246.5px;width:3px;height:3px;border-radius:50%;background:#222"></div>
<div class="t" style="right:397px;text-align:right;top:271.35px;font-size:11.4px;color:#605e5c;">9/28/2024</div>
<div class="a" style="left:552px;top:295px;width:91px;height:17px;background:#c9f0da"></div>
<div class="a" style="left:552px;top:295px;width:6px;height:17px;background:#4ec38a"></div>
<div class="t" style="left:565px;top:298.11px;font-size:10.5px;color:#323130;">Green category</div>
<div class="a" style="left:552px;top:316px;width:200px;height:42px;border:1px solid #a19f9d;box-sizing:border-box;background:#fff"></div>
<svg class="a" style="left:558px;top:325px;" width="30" height="23" viewBox="0 0 30 23" fill="none"><rect x="1.5" y="1.5" width="27" height="20" rx="2.5" stroke="#000" stroke-width="2" fill="none"/><path d="M2.5 3 L15 11.5 L27.5 3" stroke="#000" stroke-width="2" fill="none"/></svg>
<div class="t" style="left:599px;top:323.93px;font-size:11.9px;color:#201f1e;">email.eml</div>
<div class="t" style="left:599px;top:340.35px;font-size:11.4px;color:#605e5c;">914 bytes</div>
<svg class="a" style="left:733px;top:333px;" width="12" height="8" viewBox="0 0 12 8" fill="none"><path d="M1 1.5 L6 6.5 L11 1.5" stroke="#333" stroke-width="1.3" fill="none"/></svg>
<div class="t" style="left:545px;top:386.82px;font-size:20.3px;color:#000;font-weight:700;">Phishing Email Report</div>
<table class="a em" style="left:544px;top:430px;width:371px">
<colgroup><col style="width:70px"><col style="width:241px"><col style="width:49px"></colgroup>
<tr><th style="height:42px">Question<br>Number</th><th>Question</th><th>Answer</th></tr>
<tr><td style="height:23px">1</td><td>¿Has pulsado algún enlace?</td><td>No</td></tr>
<tr><td style="height:60px">2</td><td>¿Has introducido algún código de usuario o contraseña en las pantallas a las que has llegado?</td><td>No</td></tr>
<tr><td style="height:42px">3</td><td>¿Has notado algún comportamiento anómalo?</td><td>No</td></tr>
<tr><td style="height:42px">4</td><td>En las últimas horas o días, ¿Has recibido correos electrónicos similares?</td><td>No</td></tr>
<tr><td style="height:79px">5</td><td>En los últimos días, ¿has accedido a tu correo electrónico desde algún dispositivo o desde una ubicación que no es habitual para ti?</td><td>No</td></tr>
</table>
<div class="a" style="left:926px;top:368px;width:15px;height:323px;background:#ebebeb"></div>
<div class="a" style="left:926px;top:368px;width:15px;height:238px;background:#fff;box-shadow:inset 0 0 0 1px #b0aeac"></div>
<div class="a" style="left:926px;top:368px;width:15px;height:15px;background:#fff;box-shadow:inset 0 0 0 1px #b0aeac"></div>
<svg class="a" style="left:928px;top:372px;" width="11" height="7" viewBox="0 0 11 7" fill="none"><path d="M1.5 5.5 L5.5 1.5 L9.5 5.5 Z" fill="#555"/></svg>
<div class="a" style="left:926px;top:674px;width:15px;height:15px;background:#fff;box-shadow:inset 0 0 0 1px #c8c6c4"></div>
<svg class="a" style="left:928px;top:678px;" width="11" height="7" viewBox="0 0 11 7" fill="none"><path d="M1.5 1.5 L5.5 5.5 L9.5 1.5 Z" fill="#555"/></svg>
<div class="a" style="left:953px;top:185px;width:363px;height:507px;background:#fff"></div>
<div class="t" style="left:962px;top:195.06px;font-size:20.6px;color:#707070;letter-spacing:-0.5px;">Saber</div>
<svg class="a" style="left:1294px;top:199px;" width="12" height="12" viewBox="0 0 12 12" fill="none"><path d="M1 1 L11 11 M11 1 L1 11" stroke="#333" stroke-width="1.2"/></svg>
<svg class="a" style="left:1068px;top:230px;" width="47" height="42" viewBox="0 0 45 40" fill="none"><g stroke="#000" stroke-width="1.7" fill="none">
<path d="M29.1 5.9 H14.6 A8.7 8.7 0 0 0 14.6 23.3"/>
<path d="M29.1 9.9 H14.6 A6.7 6.7 0 0 0 14.6 23.3"/>
<path d="M29.1 14.6 H14.6 A4.35 4.35 0 0 0 14.6 23.3"/>
<path d="M29.1 5.05 V23 H17.3"/>
<path d="M15 35.7 H29.5 A8.7 8.7 0 0 0 29.5 18.3"/>
<path d="M15 31.7 H29.5 A6.7 6.7 0 0 0 29.5 18.3"/>
<path d="M15 27 H29.5 A4.35 4.35 0 0 0 29.5 18.3"/>
<path d="M15 36.55 V19 H25.8"/>
</g></svg>
<div class="t" style="left:1121px;top:240.29px;font-size:22.1px;color:#1a1a1a;">SABER</div>
<div class="a" style="left:1056px;top:303px;width:154px;height:42px;border:1px solid #e0e0e0;border-radius:7px;box-sizing:border-box;background:#fff"></div>
<div class="t" style="left:833px;width:600px;text-align:center;top:318.08px;font-size:12.9px;color:#242438;font-weight:700;">Categorize Emails</div>
<div class="t" style="left:837px;width:600px;text-align:center;top:380.49px;font-size:13.6px;color:#2a9e54;">Categories added successfully</div>
<div class="a" style="left:0px;top:185px;width:1316px;height:7px;background:linear-gradient(rgba(0,0,0,0.07),rgba(0,0,0,0))"></div>
<div class="a" style="left:0px;top:692px;width:1316px;height:30px;background:#f3f2f1;border-top:1px solid #d2d0ce;box-sizing:border-box"></div>
<div class="t" style="left:11px;top:702.69px;font-size:11px;color:#484644;">Items: 26</div>
<div class="t" style="left:84px;top:702.52px;font-size:11.2px;color:#484644;">Unread: 7</div>
<div class="t" style="left:711px;top:702.1px;font-size:11.7px;color:#484644;">All folders are up to date.</div>
<div class="t" style="left:873px;top:702.18px;font-size:11.6px;color:#484644;">Connected to: Microsoft Exchange</div>
<div class="a" style="left:1074px;top:693px;width:42px;height:29px;background:#d2d0ce"></div>
<svg class="a" style="left:1087px;top:702px;" width="15" height="14" viewBox="0 0 15 14" fill="none"><rect x="1" y="1" width="13" height="12" stroke="#333" stroke-width="1.2" fill="none"/><path d="M1 4 H14 M4 4 V13 M11 4 V13" stroke="#333" stroke-width="1.2"/></svg>
<svg class="a" style="left:1129px;top:701px;" width="15" height="14" viewBox="0 0 15 14" fill="none"><path d="M1 1.5 H6 A1.5 1.5 0 0 1 7.5 3 V13 A1.5 1.5 0 0 0 6 12 H1 Z M14 1.5 H9 A1.5 1.5 0 0 0 7.5 3 V13 A1.5 1.5 0 0 1 9 12 H14 Z" stroke="#333" stroke-width="1.1" fill="none"/><path d="M2.5 4.5 H6 M2.5 7 H6 M2.5 9.5 H6 M9 4.5 H12.5 M9 7 H12.5 M9 9.5 H12.5" stroke="#333" stroke-width="0.9"/></svg>
<div class="a" style="left:1164px;top:707px;width:8px;height:1px;background:#444"></div>
<div class="a" style="left:1177px;top:707.5px;width:100px;height:1px;background:#a19f9d"></div>
<div class="a" style="left:1225px;top:702px;width:5px;height:12px;background:#6b6a69"></div>
<div class="a" style="left:1282px;top:707px;width:8px;height:1px;background:#444"></div>
<div class="a" style="left:1285.5px;top:703.5px;width:1px;height:8px;background:#444"></div>
<div class="t" style="left:1309px;top:702.27px;font-size:11.5px;color:#484644;">10</div>
</body></html>
